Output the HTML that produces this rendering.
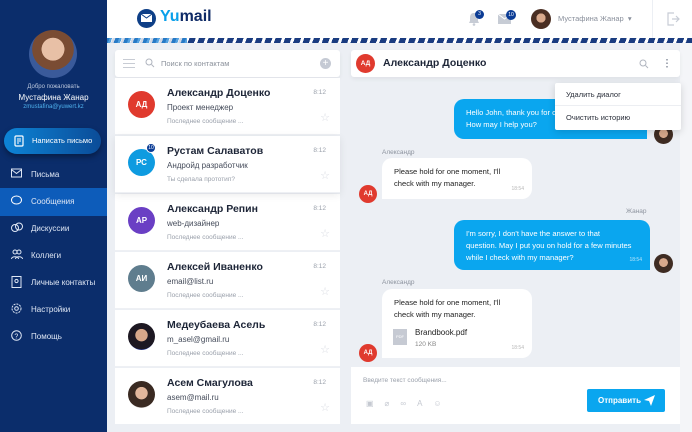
<!DOCTYPE html>
<html><head><meta charset="utf-8"><style>
*{margin:0;padding:0;box-sizing:border-box}
body{width:692px;height:432px;overflow:hidden;background:#eceff4;font-family:"Liberation Sans",sans-serif;position:relative;color:#1d2537}
.abs{position:absolute}
#side{left:0;top:0;width:107px;height:432px;background:#0b2d6b}
.nav{position:absolute;left:0;width:107px;height:27px;color:#dfe7f5;font-size:8px;line-height:27px;padding-left:31px}
.nav svg{position:absolute;left:11px;top:7px}
.row{position:absolute;left:115px;width:225px;height:57px;background:#fff;border-bottom:1px solid #eef0f4}
.av{position:absolute;left:13px;top:13px;width:27px;height:27px;border-radius:50%;color:#fff;font-size:8px;font-weight:bold;text-align:center;line-height:27px}
.nm{position:absolute;left:52px;top:9px;font-size:10.5px;font-weight:bold;color:#1d2537}
.sb{position:absolute;left:52px;top:25px;font-size:8px;color:#444b5a}
.ls{position:absolute;left:52px;top:40px;font-size:6.5px;color:#9aa0ab}
.tm{position:absolute;right:14px;top:11px;font-size:6.5px;color:#9aa0ab}
.st{position:absolute;right:10px;top:33px;font-size:11px;color:#d8dbe2}
.bub{position:absolute;border-radius:10px;font-size:7.6px;line-height:12px;padding:8px 12px}
.me{background:#0aa6ef;color:#fff;border-bottom-right-radius:0}
.th{background:#fff;color:#222;border-bottom-left-radius:0}
.bt{position:absolute;right:8px;bottom:4px;font-size:5px;opacity:.7}
.small{position:absolute;font-size:6.5px;color:#8d939e}
.ad{background:#e03a2e}
</style></head><body>
<div id="side" class="abs">
 <div class="abs" style="left:29px;top:30px;width:48px;height:48px;border-radius:50%;background:radial-gradient(circle at 50% 40%,#e8c0a6 0 30%,#7a4c33 31% 55%,#3a5a9a 56%)"></div>
 <div class="abs" style="left:0;width:107px;top:84px;text-align:center;font-size:6px;color:#bac6dc">Добро пожаловать</div>
 <div class="abs" style="left:0;width:107px;top:93px;text-align:center;font-size:8px;color:#fff">Мустафина Жанар</div>
 <div class="abs" style="left:0;width:107px;top:104px;text-align:center;font-size:6px;color:#4fb2ee">zmustafina@yuwert.kz</div>
 <div class="abs" style="left:4px;top:128px;width:97px;height:26px;border-radius:13px;background:linear-gradient(90deg,#0d84d6,#0b4c98);box-shadow:0 3px 6px rgba(0,0,0,.35);color:#fff;font-size:7.5px;line-height:26px;padding-left:28px">Написать письмо
  <svg class="abs" style="left:10px;top:7px" width="11" height="12" viewBox="0 0 11 12"><rect x="1" y="1" width="8" height="10" rx="1" fill="none" stroke="#fff" stroke-width="1.2"/><path d="M3 4h4M3 6h4M3 8h2" stroke="#fff"/></svg></div>
 <div class="nav" style="top:161px"><svg width="11" height="10"><rect x="0.5" y="1" width="10" height="8" fill="none" stroke="#dfe7f5"/><path d="M1 2l4.5 3.5L10 2" fill="none" stroke="#dfe7f5"/></svg>Письма</div>
 <div class="nav" style="top:188px;height:28px;background:#0d5cba"><svg width="11" height="11"><ellipse cx="5.5" cy="5" rx="5" ry="4" fill="none" stroke="#fff"/></svg>Сообщения</div>
 <div class="nav" style="top:215px"><svg width="12" height="11"><circle cx="4" cy="6" r="3.5" fill="none" stroke="#dfe7f5"/><circle cx="8" cy="4.5" r="3.5" fill="none" stroke="#dfe7f5"/></svg>Дискуссии</div>
 <div class="nav" style="top:242px"><svg width="12" height="11"><circle cx="4" cy="3" r="2" fill="none" stroke="#dfe7f5"/><circle cx="8" cy="3" r="2" fill="none" stroke="#dfe7f5"/><path d="M0.5 10c0-3 7-3 7 0M4.5 10c0-3 7-3 7 0" fill="none" stroke="#dfe7f5"/></svg>Коллеги</div>
 <div class="nav" style="top:269px"><svg width="11" height="12"><rect x="1" y="0.5" width="9" height="11" fill="none" stroke="#dfe7f5"/><circle cx="5.5" cy="5" r="1.6" fill="none" stroke="#dfe7f5"/></svg>Личные контакты</div>
 <div class="nav" style="top:296px"><svg width="11" height="11"><circle cx="5.5" cy="5.5" r="4.5" fill="none" stroke="#dfe7f5" stroke-dasharray="2 1"/><circle cx="5.5" cy="5.5" r="1.8" fill="none" stroke="#dfe7f5"/></svg>Настройки</div>
 <div class="nav" style="top:323px"><svg width="11" height="11"><circle cx="5.5" cy="5.5" r="4.8" fill="none" stroke="#dfe7f5"/><text x="3.4" y="8.3" font-size="7" fill="#dfe7f5" font-family="Liberation Sans">?</text></svg>Помощь</div>
</div>
<div class="abs" style="left:107px;top:0;width:585px;height:38px;background:#fff"></div>
<div class="abs" style="left:137px;top:9px;width:19px;height:19px;border-radius:50%;background:#0e3f87"><svg style="position:absolute;left:4px;top:5px" width="11" height="8"><rect x="0" y="0" width="11" height="8" fill="#fff"/><path d="M0 0l5.5 4L11 0" fill="none" stroke="#0e3f87"/></svg></div>
<div class="abs" style="left:160px;top:8px;font-size:16px;font-weight:bold;color:#0e2a66"><span style="color:#0aa0ea">Yu</span>mail</div>
<svg class="abs" style="left:468px;top:12px" width="12" height="14"><path d="M6 1c-3 0-4 2-4 5v3l-1 2h10l-1-2V6c0-3-1-5-4-5z" fill="#c7ccd5"/><circle cx="6" cy="12.5" r="1.3" fill="#c7ccd5"/></svg>
<div class="abs" style="left:475px;top:10px;width:9px;height:9px;border-radius:50%;background:#0b3c95;color:#fff;font-size:5px;text-align:center;line-height:9px">3</div>
<svg class="abs" style="left:498px;top:14px" width="13" height="10"><rect width="13" height="10" fill="#c7ccd5"/><path d="M0 0l6.5 5L13 0" fill="none" stroke="#fff"/></svg>
<div class="abs" style="left:506px;top:10px;width:10px;height:10px;border-radius:50%;background:#0b3c95;color:#fff;font-size:5px;text-align:center;line-height:10px">10</div>
<div class="abs" style="left:531px;top:9px;width:20px;height:20px;border-radius:50%;background:radial-gradient(circle at 50% 45%,#d9a98c 0 30%,#4a2e22 32%)"></div>
<div class="abs" style="left:558px;top:14px;font-size:7.5px;color:#8a909c">Мустафина Жанар &nbsp;▾</div>
<div class="abs" style="left:652px;top:0;width:1px;height:38px;background:#eceff4"></div>
<svg class="abs" style="left:666px;top:12px" width="14" height="14"><path d="M8 1H2v12h6M6 7h7M10 4l3 3-3 3" fill="none" stroke="#c7ccd5" stroke-width="1.2"/></svg>
<div class="abs" style="left:107px;top:38px;width:585px;height:5px;background:repeating-linear-gradient(-70deg,#1a3c80 0 6px,#fff 6px 9px)"></div>
<div class="abs" style="left:107px;top:38px;width:80px;height:5px;background:repeating-linear-gradient(-70deg,#2a8ad8 0 6px,#fff 6px 9px);opacity:.8"></div>
<!-- contacts -->
<div class="abs" style="left:115px;top:50px;width:225px;height:27px;background:#fff;border-radius:3px;box-shadow:0 2px 4px rgba(0,0,0,.06)">
 <div class="abs" style="left:8px;top:9px;width:12px;height:9px;border-top:1px solid #c8ccd4;border-bottom:1px solid #c8ccd4"></div><div class="abs" style="left:8px;top:13px;width:12px;height:1px;background:#c8ccd4"></div>
 <svg class="abs" style="left:30px;top:8px" width="10" height="10"><circle cx="4" cy="4" r="3" fill="none" stroke="#b0b5bf"/><path d="M6.5 6.5L9 9" stroke="#b0b5bf"/></svg>
 <div class="abs" style="left:46px;top:9px;font-size:7.5px;color:#8c929c">Поиск по контактам</div>
 <div class="abs" style="left:205px;top:8px;width:11px;height:11px;border-radius:50%;background:#c5cad4;color:#fff;font-size:10px;line-height:11px;text-align:center">+</div>
</div>
<div class="row" style="top:78px"><div class="av ad">АД</div><div class="nm">Александр Доценко</div><div class="sb">Проект менеджер</div><div class="ls">Последнее сообщение ...</div><div class="tm">8:12</div><div class="st">☆</div></div>
<div class="row" style="top:136px;box-shadow:0 2px 8px rgba(0,0,0,.08);z-index:2"><div class="av" style="background:#0e9be0">РС</div><div class="abs" style="left:31px;top:7px;width:10px;height:10px;border-radius:50%;background:#0b3c95;border:1px solid #fff;color:#fff;font-size:5px;text-align:center;line-height:8px">10</div><div class="nm">Рустам Салаватов</div><div class="sb">Андройд разработчик</div><div class="ls">Ты сделала прототип?</div><div class="tm">8:12</div><div class="st">☆</div></div>
<div class="row" style="top:194px"><div class="av" style="background:#6a3fc4">АР</div><div class="nm">Александр Репин</div><div class="sb">web-дизайнер</div><div class="ls">Последнее сообщение ...</div><div class="tm">8:12</div><div class="st">☆</div></div>
<div class="row" style="top:252px"><div class="av" style="background:#5f7d8e">АИ</div><div class="nm">Алексей Иваненко</div><div class="sb">email@list.ru</div><div class="ls">Последнее сообщение ...</div><div class="tm">8:12</div><div class="st">☆</div></div>
<div class="row" style="top:310px"><div class="av" style="background:radial-gradient(circle at 50% 45%,#d7a78a 0 30%,#1d1822 32% 70%,#2b3fa0 72%)"></div><div class="nm">Медеубаева Асель</div><div class="sb">m_asel@gmail.ru</div><div class="ls">Последнее сообщение ...</div><div class="tm">8:12</div><div class="st">☆</div></div>
<div class="row" style="top:368px;height:56px;border-bottom:none"><div class="av" style="background:radial-gradient(circle at 50% 45%,#e2b79c 0 30%,#3a2a22 32% 70%,#c9c2bf 72%)"></div><div class="nm">Асем Смагулова</div><div class="sb">asem@mail.ru</div><div class="ls">Последнее сообщение ...</div><div class="tm">8:12</div><div class="st">☆</div></div>
<!-- chat -->
<div class="abs" style="left:680px;top:43px;width:12px;height:389px;background:#f4f5f8"></div>
<div class="abs" style="left:351px;top:50px;width:329px;height:27px;background:#fff;border-radius:3px;box-shadow:0 2px 4px rgba(0,0,0,.06)">
 <div class="abs ad" style="left:5px;top:4px;width:19px;height:19px;border-radius:50%;color:#fff;font-size:6.5px;font-weight:bold;line-height:19px;text-align:center">АД</div>
 <div class="abs" style="left:32px;top:7px;font-size:10.5px;font-weight:bold">Александр Доценко</div>
 <svg class="abs" style="left:288px;top:9px" width="10" height="10"><circle cx="4" cy="4" r="3" fill="none" stroke="#b0b5bf"/><path d="M6.5 6.5L9 9" stroke="#b0b5bf"/></svg>
 <div class="abs" style="left:315px;top:8px;width:2px;height:10px;background:radial-gradient(circle,#a8adb7 0.9px,transparent 1px) 0 0/2px 3.5px"></div>
</div>
<div class="bub me" style="left:454px;top:99px;width:193px;height:40px">Hello John, thank you for calling!<br>How may I help you?<div class="bt">18:54</div></div>
<div class="abs" style="left:654px;top:125px;width:19px;height:19px;border-radius:50%;background:radial-gradient(circle at 50% 45%,#d9a98c 0 30%,#3e2b22 32%)"></div>
<div class="abs" style="left:555px;top:83px;width:126px;height:47px;background:#fff;box-shadow:0 2px 8px rgba(0,0,0,.15);border-radius:2px;z-index:3;font-size:7.5px;color:#2a2f3a">
 <div style="height:23px;line-height:23px;padding-left:11px;border-bottom:1px solid #eceef2">Удалить диалог</div><div style="height:23px;line-height:23px;padding-left:11px">Очистить историю</div></div>
<div class="small" style="left:382px;top:149px">Александр</div>
<div class="bub th" style="left:382px;top:158px;width:150px;height:41px">Please hold for one moment, I'll<br>check with my manager.<div class="bt" style="color:#999">18:54</div></div>
<div class="abs ad" style="left:359px;top:185px;width:18px;height:18px;border-radius:50%;color:#fff;font-size:6px;font-weight:bold;line-height:18px;text-align:center">АД</div>
<div class="small" style="left:626px;top:208px">Жанар</div>
<div class="bub me" style="left:454px;top:220px;width:196px;height:50px">I'm sorry, I don't have the answer to that<br>question. May I put you on hold for a few minutes<br>while I check with my manager?<div class="bt">18:54</div></div>
<div class="abs" style="left:654px;top:254px;width:19px;height:19px;border-radius:50%;background:radial-gradient(circle at 50% 45%,#d9a98c 0 30%,#3e2b22 32%)"></div>
<div class="small" style="left:382px;top:279px">Александр</div>
<div class="bub th" style="left:382px;top:289px;width:150px;height:69px">Please hold for one moment, I'll<br>check with my manager.
 <div class="abs" style="left:11px;top:40px;width:14px;height:16px;background:#c6cad3;color:#fff;font-size:4px;text-align:center;line-height:16px">PDF</div>
 <div class="abs" style="left:33px;top:38px;font-size:8px;color:#222">Brandbook.pdf</div>
 <div class="abs" style="left:33px;top:50px;font-size:6.5px;color:#888">120 KB</div>
 <div class="bt" style="color:#999">18:54</div></div>
<div class="abs ad" style="left:359px;top:344px;width:18px;height:18px;border-radius:50%;color:#fff;font-size:6px;font-weight:bold;line-height:18px;text-align:center">АД</div>
<div class="abs" style="left:351px;top:367px;width:329px;height:57px;background:#fff">
 <div class="abs" style="left:12px;top:10px;font-size:6.5px;color:#9aa0ab">Введите текст сообщения...</div>
 <div class="abs" style="left:15px;top:32px;font-size:8px;color:#c5c9d1;letter-spacing:11px">▣⌀∞A☺</div>
 <div class="abs" style="left:236px;top:22px;width:78px;height:23px;background:#0aa6ef;border-radius:2px;color:#fff;font-size:8px;font-weight:bold;line-height:23px;padding-left:11px">Отправить
  <svg class="abs" style="left:57px;top:6px" width="11" height="11"><path d="M0 5L11 0 7 11 5 6z" fill="#fff"/></svg></div>
</div>
</body></html>
